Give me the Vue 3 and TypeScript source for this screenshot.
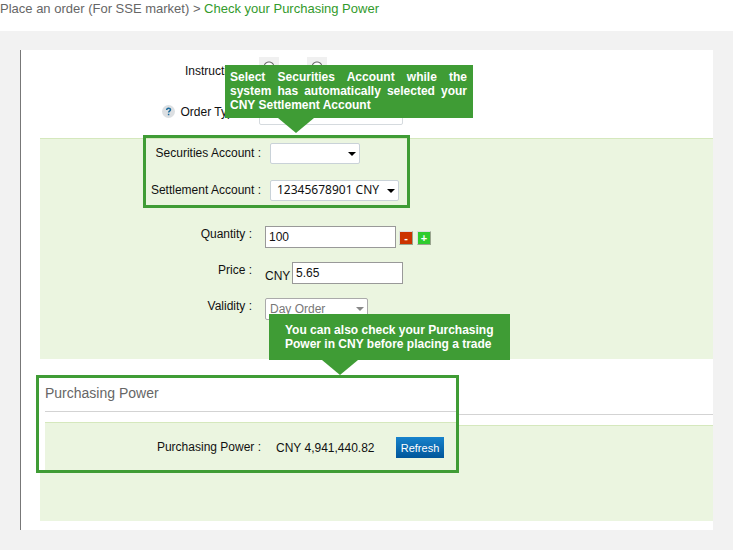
<script setup lang="ts">
import { ref } from 'vue'

const quantity = ref<string>('100')
const price = ref<string>('5.65')
const settlement = ref<string>('12345678901 CNY')
const securities = ref<string>('')
const validity = ref<string>('Day Order')

function step(delta: number): void {
  quantity.value = String(Math.max(0, Number(quantity.value) + delta))
}
</script>

<template>
  <div class="page">
    <header class="crumbs">
      <span>Place an order (For SSE market) &gt; </span>
      <a href="#power">Check your Purchasing Power</a>
    </header>

    <main class="stage">
      <div class="card">
        <div class="intro">
          <div class="row intro-row">
            <span class="label">Instruction :</span>
            <div class="radios">
              <input type="radio" name="instruction" aria-label="First instruction" />
              <input type="radio" name="instruction" aria-label="Second instruction" />
            </div>
          </div>
          <div class="row intro-row">
            <label class="label help-label" for="order-type">
              <svg class="help" viewBox="0 0 13 13" aria-hidden="true">
                <circle cx="6.5" cy="6.5" r="6.5" fill="#dcdfe2" />
                <path d="M4.700 5c0-2.400 3.800-2.300 3.800-.2 0 1.400-1.900 1.300-1.900 2.800M6.600 8.800v1.400" fill="none" stroke="#1b6a9c" stroke-width="1.5" />
              </svg>
              <span>Order Type :</span>
            </label>
            <select id="order-type" class="type-select"><option></option></select>
          </div>
        </div>

        <section class="panel">
          <div class="highlight accounts">
            <div class="account-row">
              <label class="label" for="securities">Securities Account :</label>
              <div class="picker short">
                <select id="securities" v-model="securities"><option value=""></option></select>
                <svg class="arrow" viewBox="0 0 8 4" aria-hidden="true"><path d="M0 0h8L4 4z" /></svg>
              </div>
            </div>
            <div class="account-row">
              <label class="label" for="settlement">Settlement Account :</label>
              <div class="picker long">
                <select id="settlement" v-model="settlement"><option>12345678901 CNY</option></select>
                <svg class="arrow" viewBox="0 0 8 4" aria-hidden="true"><path d="M0 0h8L4 4z" /></svg>
              </div>
            </div>
            <div class="callout callout-accounts">
              Select Securities Account while the system has automatically selected your CNY Settlement Account
            </div>
          </div>

          <div class="fields">
            <div class="row">
              <label class="label" for="quantity">Quantity :</label>
              <div class="control">
                <input id="quantity" v-model="quantity" class="text quantity" type="text" />
                <button class="step minus" type="button" @click="step(-100)">-</button>
                <button class="step plus" type="button" @click="step(100)">+</button>
              </div>
            </div>
            <div class="row">
              <label class="label" for="price">Price :</label>
              <div class="control">
                <span class="currency">CNY</span>
                <input id="price" v-model="price" class="text price" type="text" />
              </div>
            </div>
            <div class="row">
              <label class="label" for="validity">Validity :</label>
              <div class="picker validity">
                <select id="validity" v-model="validity"><option>Day Order</option></select>
                <svg class="arrow" viewBox="0 0 8 4" aria-hidden="true"><path d="M0 0h8L4 4z" /></svg>
              </div>
            </div>
          </div>
        </section>

        <section id="power" class="power">
          <div class="rule"></div>
          <div class="power-panel"></div>
          <div class="highlight power-box">
            <h2>Purchasing Power</h2>
            <div class="power-row">
              <span class="label">Purchasing Power :</span>
              <span class="amount">CNY 4,941,440.82</span>
              <button class="refresh" type="button">Refresh</button>
            </div>
            <div class="callout callout-power">
              You can also check your Purchasing Power in CNY before placing a trade
            </div>
          </div>
        </section>
      </div>
    </main>
  </div>
</template>

<style>
body {
  background: #f2f2f2;
}
</style>

<style scoped>
.page,
.page * {
  box-sizing: border-box;
}
.page {
  font-family: "Liberation Sans", Arial, sans-serif;
  font-size: 12px;
  line-height: 16px;
  color: #111;
}
select,
input,
button {
  font: inherit;
  margin: 0;
}
.crumbs {
  height: 31px;
  background: #fff;
  font-size: 13px;
  line-height: 18px;
  color: #666;
}
.crumbs a {
  color: #339a2c;
  text-decoration: none;
}
.stage {
  padding: 19px 20px 20px;
  background: #f2f2f2;
}
.card {
  padding: 0 0 9px 19px;
  background: #fff;
  border-left: 1px solid #777;
}
.row {
  display: grid;
  grid-template-columns: 212px 1fr;
  column-gap: 13px;
}
.label {
  text-align: right;
  white-space: nowrap;
}
.intro {
  padding-bottom: 6px;
}
.intro-row {
  grid-template-columns: 207px 1fr;
  height: 41px;
  align-items: center;
  column-gap: 12px;
}
.radios {
  display: flex;
  gap: 28px;
  align-self: start;
  padding-top: 7px;
}
.radios input {
  width: 20px;
  height: 20px;
  border: 4px solid #f0f0f0;
  background: radial-gradient(circle, #fff 4px, #666 5px, #f0f0f0 6px);
  appearance: none;
}
.help-label {
  display: flex;
  justify-content: flex-end;
  align-items: center;
  gap: 6px;
}
.help {
  width: 13px;
  height: 13px;
}
.type-select {
  width: 144px;
  height: 26px;
  border: 1px solid #d5dade;
  border-radius: 2px;
  background: #fff;
  appearance: none;
}
.panel {
  padding-bottom: 39px;
  background: #ebf5e0;
  border-top: 1px solid #d5e8bd;
}
.highlight {
  border: 3px solid #3f9c35;
}
.accounts {
  position: relative;
  display: grid;
  row-gap: 16px;
  width: 267px;
  margin: -4px 0 18px 103px;
  padding: 5px 0 4px;
}
.account-row {
  display: grid;
  grid-template-columns: 115px 1fr;
  column-gap: 9px;
}
.account-row .label {
  padding-top: 2px;
}
.picker {
  position: relative;
  height: 21px;
}
.picker select {
  width: 100%;
  height: 100%;
  padding: 0 4px;
  border: 1px solid #c9d2d8;
  border-radius: 2px;
  background: #fff;
  color: #111;
  appearance: none;
}
.arrow {
  position: absolute;
  right: 4px;
  top: 9px;
  width: 8px;
  height: 4px;
  pointer-events: none;
}
.short {
  width: 90px;
}
.long {
  width: 129px;
}
.picker.long select {
  padding: 0 6px 2px;
  font-family: "Noto Sans", sans-serif;
}
.fields {
  display: grid;
  row-gap: 14px;
}
.control {
  display: flex;
  align-items: center;
}
.text {
  height: 22px;
  padding: 0 3px;
  border: 1px solid #999;
  background: #fff;
  color: #111;
}
.quantity {
  width: 131px;
  margin-right: 3px;
}
.price {
  width: 111px;
}
.currency {
  width: 27px;
  padding-top: 5px;
}
.step {
  width: 14px;
  height: 14px;
  margin: 1px 4px 0 0;
  padding: 0;
  border: 1px solid #9aa58f;
  border-top-color: #ddd;
  border-left-color: #ddd;
  color: #fff;
  font-weight: bold;
  font-size: 11px;
  line-height: 12px;
}
.minus {
  background: #cc3300;
}
.plus {
  background: #2ecc2e;
}
.validity {
  width: 103px;
  height: 22px;
}
.validity select {
  border-color: #aaa;
  color: #777;
}
.validity .arrow {
  fill: #888;
}
.power {
  position: relative;
  padding-top: 55px;
}
.rule {
  height: 1px;
  margin-bottom: 10px;
  background: #d3d3d3;
}
.power-panel {
  height: 96px;
  background: #ebf5e0;
  border-top: 1px solid #d5e8bd;
}
.power-box {
  position: absolute;
  left: -4px;
  top: 16px;
  width: 423px;
  padding-left: 6px;
  background: #fff;
}
h2 {
  height: 34px;
  margin: 0 0 10px;
  padding-top: 6px;
  border-bottom: 1px solid #d3d3d3;
  font-size: 14px;
  font-weight: normal;
  line-height: 18px;
  color: #666;
}
.power-row {
  display: grid;
  grid-template-columns: 216px 120px 48px;
  column-gap: 15px;
  align-items: center;
  height: 48px;
  padding-top: 2px;
  background: #ebf5e0;
  border-top: 1px solid #d5e8bd;
}
.power-row {
  grid-template-columns: 216px 105px 48px;
}
.power-row .label {
  padding-bottom: 2px;
}
.refresh {
  height: 21px;
  padding: 0;
  border: 0;
  background: linear-gradient(#1783cc, #00569a);
  color: #fff;
  font-size: 11px;
}
.callout {
  position: absolute;
  z-index: 1;
  background: #3f9c35;
  color: #fff;
  font-weight: bold;
  line-height: 14px;
}
.callout::after {
  content: "";
  position: absolute;
  top: 100%;
  left: 53px;
  border: 18px solid transparent;
  border-top: 15px solid #3f9c35;
  border-bottom: 0;
}
.callout-accounts {
  left: 79px;
  top: -73px;
  width: 248px;
  padding: 5px 6px 6px 5px;
  text-align: justify;
}
.callout-power {
  left: 230px;
  top: -64px;
  width: 241px;
  padding: 9px 12px 9px 16px;
}
</style>
